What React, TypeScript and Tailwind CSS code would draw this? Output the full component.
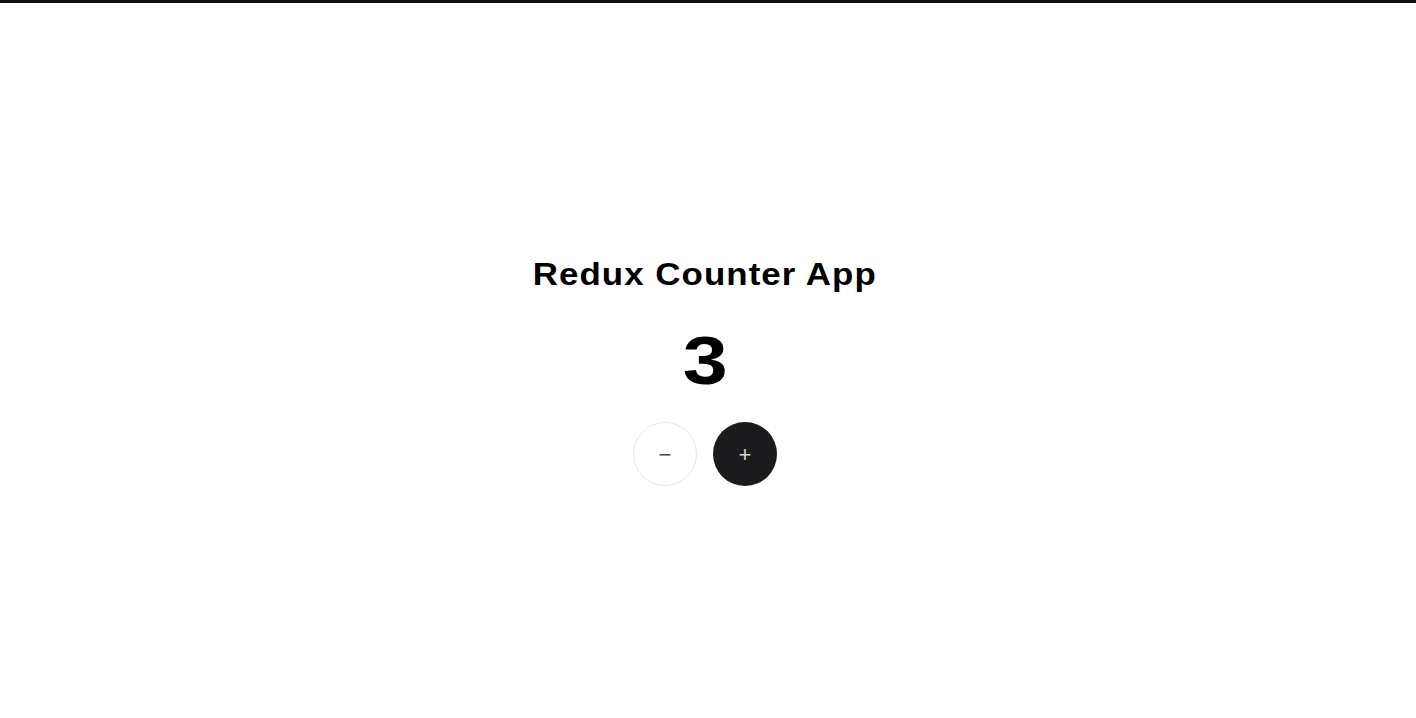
import { useState } from "react";

export default function App() {
	const [count, setCount] = useState(3);

	return (
		<div className="flex min-h-screen flex-col items-center border-t-[3px] border-[#111] bg-white pr-[6px] pt-[251px] font-['Liberation_Sans',Arial,sans-serif] text-black">
			<h1 className="scale-x-[1.09] text-[32px] font-bold leading-[40px] tracking-[0.03em]">Redux Counter App</h1>
			<div className="mt-[31px] scale-x-[1.17] text-[69px] font-bold leading-[72px]">{count}</div>
			<div className="mt-[25px] flex gap-4">
				<button
					type="button"
					onClick={() => setCount((c) => c - 1)}
					className="flex h-16 w-16 items-center justify-center rounded-full border border-[#e5e5e5] bg-white text-[22px] text-[#444]"
				>
					−
				</button>
				<button
					type="button"
					onClick={() => setCount((c) => c + 1)}
					className="flex h-16 w-16 items-center justify-center rounded-full bg-[#1b1b1d] text-[22px] text-[#d4d4d4]"
				>
					+
				</button>
			</div>
		</div>
	);
}
